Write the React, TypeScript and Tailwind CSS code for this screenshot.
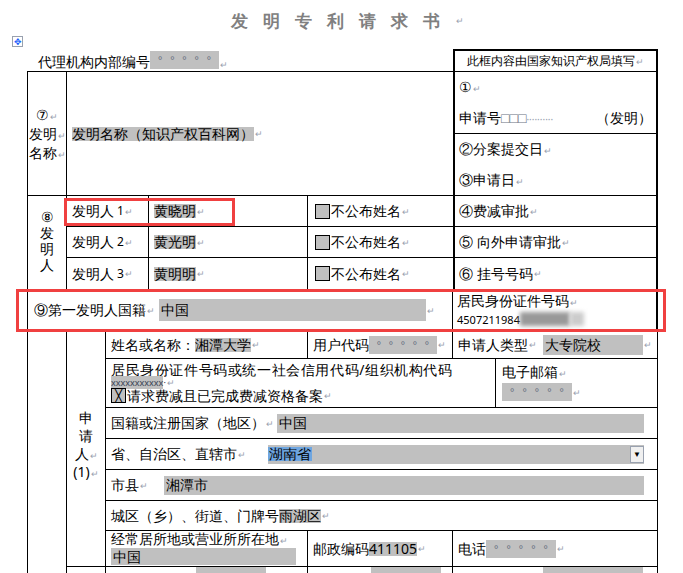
import React from "react";

const R = () => <span className="text-[9px] text-gray-400 ml-[1px] shrink-0">↵</span>;
const Dots = ({ w }: { w: string }) => (
  <span className={`inline-flex shrink-0 items-center justify-around bg-[#c0c0c0] text-gray-500 text-[10px] h-[18px] px-[4px] ${w}`}>
    <span>°</span><span>°</span><span>°</span><span>°</span><span>°</span>
  </span>
);
const Hl = ({ children }: { children: React.ReactNode }) => <span className="bg-[#c0c0c0]">{children}</span>;
const Box = () => <span className="inline-block w-[15px] h-[15px] bg-[#c0c0c0] border border-black mr-[1px]" />;

const base = "border-r border-b border-black flex items-center px-[5px] overflow-hidden whitespace-nowrap";

export default function App() {
  return (
    <div className="relative w-[683px] h-[573px] overflow-hidden bg-white text-black text-[13px] leading-none font-['SimSun','Noto_Sans_CJK_SC',sans-serif]">
      <div className="h-[36px] pt-[4px] flex items-center justify-center pl-[12px]">
        <span className="text-[17px] text-[#808080] tracking-[15px] font-bold">发明专利请求书</span>
        <R />
      </div>
      <div className="h-[13px] pl-[12px]">
        <span className="flex w-[11px] h-[11px] border border-gray-400 items-center justify-center text-[9px] text-blue-600 bg-white">✥</span>
      </div>
      <div className="ml-[27px] grid grid-cols-[40px_39px_43px_159px_145px_43px_162px] grid-rows-[23px_62px_62px_31px_31px_32px_41px_28px_49px_31px_31px_31px_30px_36px_40px] w-[631px]">
        <div className="col-start-1 col-span-5 row-start-1 border-b border-black flex items-end pb-[2px] pl-[11px] text-[14px]">
          代理机构内部编号<Dots w="w-[69px]" /><R />
        </div>
        <div className="col-start-6 col-span-2 row-start-1 border-t-2 border-x-2 border-b border-black flex items-center justify-center text-[11.5px]">
          此框内容由国家知识产权局填写<R />
        </div>
        <div className="col-start-1 row-start-2 row-span-2 border-l border-r border-b border-black flex flex-col items-center justify-center gap-[5px] text-[14px]">
          <span>⑦<R /></span><span>发明<R /></span><span>名称<R /></span>
        </div>
        <div className="col-start-2 col-span-4 row-start-2 row-span-2 border-b border-black flex items-center px-[5px] text-[14px]">
          <Hl>发明名称（知识产权百科网）</Hl><R />
        </div>
        <div className="col-start-6 col-span-2 row-start-2 border-x-2 border-b border-black flex flex-col justify-around px-[4px] text-[14px]">
          <span>①<R /></span>
          <span className="flex justify-between whitespace-nowrap"><span>申请号<span className="text-gray-500">□□□</span><span className="text-gray-400 text-[10px]">··········</span></span><span>（发明）</span></span>
        </div>
        <div className="col-start-6 col-span-2 row-start-3 border-x-2 border-b border-black flex flex-col justify-around px-[4px] text-[14px]">
          <span>②分案提交日<R /></span><span>③申请日<R /></span>
        </div>
        <div className="col-start-1 row-start-4 row-span-3 border-l border-r border-b border-black flex flex-col items-center pt-[14px] gap-[2px] text-[14px]">
          <span>⑧</span><span>发</span><span>明</span><span>人</span>
        </div>
        {[["1", "黄晓明", "④费减审批"], ["2", "黄光明", "⑤ 向外申请审批"], ["3", "黄明明", "⑥ 挂号号码"]].map(([n, nm, r], i) => (
          <React.Fragment key={n}>
            <div className={`col-start-2 col-span-2 ${base} text-[14px]`} style={{ gridRowStart: 4 + i }}>发明人 <span className="text-[12px] ml-[3px]">{n}</span><R /></div>
            <div className={`col-start-4 ${base} text-[14px]`} style={{ gridRowStart: 4 + i }}><Hl>{nm}</Hl><R /></div>
            <div className="col-start-5 border-b border-black flex items-center px-[7px] text-[14px] whitespace-nowrap" style={{ gridRowStart: 4 + i }}><Box />不公布姓名<R /></div>
            <div className="col-start-6 col-span-2 border-x-2 border-b border-black flex items-center px-[4px] text-[14px]" style={{ gridRowStart: 4 + i }}>{r}<R /></div>
          </React.Fragment>
        ))}
        <div className="col-start-1 col-span-5 row-start-7 border-l border-r border-b border-black flex items-center pl-[6px] text-[14px] whitespace-nowrap">
          ⑨第一发明人国籍<R /><span className="ml-[4px] w-[267px] h-[22px] bg-[#c0c0c0] flex items-center px-[2px]">中国</span><R />
        </div>
        <div className="col-start-6 col-span-2 row-start-7 border-r-2 border-b border-black flex flex-col justify-center gap-[4px] px-[4px]">
          <span className="text-[14px]">居民身份证件号码<R /></span>
          <span className="flex items-center text-[11px]">4507211984<span className="w-[50px] h-[14px] bg-[#999] blur-[2px]" /><span className="w-[14px] h-[14px] bg-[#ccc] blur-[2px]" /></span>
        </div>
        <div className="col-start-1 row-start-8 row-span-8 border-l border-r border-black" />
        <div className="col-start-2 row-start-8 row-span-7 border-r border-b border-black flex flex-col items-center justify-center gap-[4px] text-[14px] pb-[8px]">
          <span>申</span><span>请</span><span>人<R /></span><span>(1)<R /></span>
        </div>
        <div className={`col-start-3 col-span-2 row-start-8 ${base} text-[14px]`}>姓名或名称：<Hl>湘潭大学</Hl><R /></div>
        <div className={`col-start-5 row-start-8 ${base} text-[14px]`}>用户代码<Dots w="w-[68px]" /><R /></div>
        <div className={`col-start-6 col-span-2 row-start-8 ${base} text-[14px]`}>申请人类型<R /><span className="ml-[6px] flex-1 min-w-0 h-[20px] bg-[#c0c0c0] flex items-center px-[2px]">大专院校</span><R /></div>
        <div className="col-start-3 col-span-4 row-start-9 border-r border-b border-black flex flex-col justify-center px-[5px] text-[14px] gap-[1px] whitespace-nowrap">
          <span className="tracking-[0.6px]">居民身份证件号码或统一社会信用代码/组织机构代码</span>
          <span className="text-[9px] text-gray-700"><span className="bg-[#c0c0c0]">xxxxxxxxxxx</span>·<R /></span>
          <span className="flex items-center"><span className="w-[15px] h-[15px] border border-black bg-[#c0c0c0] mr-[1px] text-[12px] flex items-center justify-center">╳</span>请求费减且已完成费减资格备案<R /></span>
        </div>
        <div className="col-start-7 row-start-9 border-r border-b border-black flex flex-col justify-center px-[6px] gap-[4px] text-[14px]">
          <span>电子邮箱<R /></span><span><Dots w="w-[70px]" /><R /></span>
        </div>
        <div className={`col-start-3 col-span-5 row-start-10 ${base} text-[14px]`}>国籍或注册国家（地区）<R /><span className="ml-[3px] flex-1 mr-[8px] min-w-0 h-[19px] bg-[#c0c0c0] flex items-center px-[2px]">中国</span></div>
        <div className={`col-start-3 col-span-5 row-start-11 ${base} text-[14px]`}>省、自治区、直辖市<R /><span className="ml-[22px] flex-1 mr-[8px] min-w-0 h-[19px] bg-[#c0c0c0] flex items-center justify-between"><span className="bg-[#6fa6e0] px-[1px]">湖南省</span><span className="w-[14px] h-[17px] bg-[#f0f0f0] border border-gray-400 text-[8px] flex items-center justify-center">▼</span></span></div>
        <div className={`col-start-3 col-span-5 row-start-12 ${base} text-[14px]`}>市县<R /><span className="ml-[16px] flex-1 mr-[8px] min-w-0 h-[19px] bg-[#c0c0c0] flex items-center px-[2px]">湘潭市</span></div>
        <div className={`col-start-3 col-span-5 row-start-13 ${base} text-[14px]`}>城区（乡）、街道、门牌号<Hl>雨湖区</Hl><R /></div>
        <div className="col-start-3 col-span-2 row-start-14 border-r border-b border-black flex flex-col justify-center px-[5px] gap-[2px] text-[14px] whitespace-nowrap">
          <span>经常居所地或营业所所在地<R /></span>
          <span className="w-[185px] h-[17px] bg-[#c0c0c0] flex items-center px-[2px]">中国</span>
        </div>
        <div className={`col-start-5 row-start-14 ${base} text-[14px]`}>邮政编码<Hl>411105</Hl><R /></div>
        <div className={`col-start-6 col-span-2 row-start-14 ${base} text-[14px]`}>电话<Dots w="w-[70px]" /><R /></div>
        <div className="col-start-2 row-start-15 border-r border-black" />
        <div className="col-start-3 col-span-2 row-start-15 border-r border-black flex items-start pl-[90px]"><span className="w-[70px] h-[6px] bg-[#c0c0c0]" /></div>
        <div className="col-start-5 row-start-15 border-r border-black flex items-start pl-[63px]"><span className="w-[70px] h-[6px] bg-[#c0c0c0]" /></div>
        <div className="col-start-6 col-span-2 row-start-15 border-r border-black flex items-start pl-[90px]"><span className="w-[100px] h-[6px] bg-[#c0c0c0]" /></div>
      </div>
      <div className="absolute left-[64px] top-[198px] w-[171px] h-[28px] border-[3px] border-[#f04040]" />
      <div className="absolute left-[16px] top-[289px] w-[650px] h-[43px] border-[3px] border-[#f04040]" />
    </div>
  );
}
